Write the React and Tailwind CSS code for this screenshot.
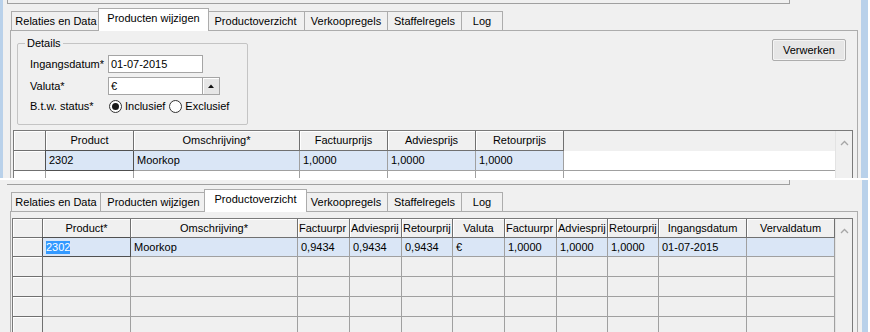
const TABS = [
  { label: "Relaties en Data", w: "w-[90px]", ws: "w-[94px]" },
  { label: "Producten wijzigen", w: "w-[107px]", ws: "w-[111px]" },
  { label: "Productoverzicht", w: "w-[99px]", ws: "w-[103px]" },
  { label: "Verkoopregels", w: "w-[84px]", ws: "w-[88px]" },
  { label: "Staffelregels", w: "w-[75px]", ws: "w-[79px]" },
  { label: "Log", w: "w-[42px]", ws: "w-[46px]" },
];

function TabStrip({ active }) {
  return (
    <div className="flex items-end h-[22px] pl-[1px]">
      {TABS.map(t =>
        t.label === active ? (
          <div
            key={t.label}
            className={`${t.ws} -ml-[2px] -mr-[3px] h-[23px] -mb-px relative z-10 bg-white border border-b-0 border-[#acacac] flex items-center justify-center pb-[3px] shrink-0`}
          >
            {t.label}
          </div>
        ) : (
          <div
            key={t.label}
            className={`${t.w} -mr-px h-[19px] bg-[#f0f0f0] border border-b-0 border-[#acacac] flex items-center justify-center shrink-0`}
          >
            {t.label}
          </div>
        )
      )}
    </div>
  );
}

function Radio({ checked, label }) {
  return (
    <div className="flex items-center gap-[3px]">
      <div className="w-[13px] h-[13px] rounded-full border border-[#333333] bg-white flex items-center justify-center">
        {checked && <div className="w-[7px] h-[7px] rounded-full bg-[#1a1a1a]" />}
      </div>
      <span>{label}</span>
    </div>
  );
}

function HeadCell({ w, left, children }) {
  return (
    <div
      className={`${w} shrink-0 h-full flex items-center overflow-hidden whitespace-nowrap border-r border-b border-[#707070] bg-[#f0f0f0] shadow-[inset_1px_1px_0_#ffffff] ${left ? "justify-start pl-[1px]" : "justify-center"}`}
    >
      {children}
    </div>
  );
}

function Cell({ w, bg, focus, children }) {
  return (
    <div
      className={`${w} ${bg} shrink-0 h-full flex items-center pl-[3px] overflow-hidden whitespace-nowrap border-r border-b ${focus ? "border-[#505050] relative z-10 shadow-[-1px_-1px_0_#505050]" : "border-[#a0a0a0]"}`}
    >
      {children}
    </div>
  );
}

function ScrollUp() {
  return (
    <div className="w-[17px] shrink-0 bg-[#f0f0f0] border-l border-[#e3e3e3] flex justify-center pt-[9px]">
      <svg width="9" height="6" viewBox="0 0 9 6">
        <polyline points="1,5 4.5,1.5 8,5" fill="none" stroke="#a6a6a6" strokeWidth="1.3" />
      </svg>
    </div>
  );
}

function Fields() {
  return (
    <fieldset className="ml-[6px] mt-[6px] w-[231px] border border-[#c4c4c4] rounded-[2px] shrink-0">
      <legend className="ml-[7px] px-[2px] leading-[13px]">Details</legend>
      <div className="grid grid-cols-[78px_auto] gap-y-[4px] pl-[12px] pt-[5px] pb-[10px] items-center">
        <span>Ingangsdatum*</span>
        <div className="w-[95px] h-[18px] bg-white border border-[#a5a5a5] flex items-center pl-[2px]">
          01-07-2015
        </div>
        <span>Valuta*</span>
        <div className="flex h-[18px]">
          <div className="w-[95px] h-[18px] bg-white border border-[#a5a5a5] flex items-center pl-[2px]">€</div>
          <div className="w-[17px] h-[18px] bg-[#e6e6e6] border border-[#a5a5a5] border-l-0 flex items-center justify-center shadow-[inset_1px_1px_0_#ffffff]">
            <svg width="6" height="4" viewBox="0 0 6 4">
              <polygon points="0,4 3,0.5 6,4" fill="#111111" />
            </svg>
          </div>
        </div>
        <span>B.t.w. status*</span>
        <div className="flex items-center gap-[4px] h-[15px] pl-[1px]">
          <Radio checked label="Inclusief" />
          <Radio label="Exclusief" />
        </div>
      </div>
    </fieldset>
  );
}

function TopGrid() {
  const cols = [
    ["w-[88px]", "Product", "2302"],
    ["w-[166px]", "Omschrijving*", "Moorkop"],
    ["w-[88px]", "Factuurprijs", "1,0000"],
    ["w-[88px]", "Adviesprijs", "1,0000"],
    ["w-[88px]", "Retourprijs", "1,0000"],
  ];
  return (
    <div className="ml-[2px] mr-[4px] mt-[5px] border border-[#7a7a7a] flex bg-white">
      <div className="flex-1 flex flex-col min-w-0">
        <div className="flex h-[20px]">
          <HeadCell w="w-[32px]" />
          {cols.map(c => (
            <HeadCell key={c[1]} w={c[0]}>{c[1]}</HeadCell>
          ))}
          <div className="flex-1 bg-[#f0f0f0]" />
        </div>
        <div className="flex h-[20px]">
          <HeadCell w="w-[32px]" />
          {cols.map((c, i) => (
            <Cell key={c[1]} w={c[0]} bg="bg-[#dae6f6]" focus={i === 0}>{c[2]}</Cell>
          ))}
          <div className="flex-1 bg-white border-b border-[#a0a0a0]" />
        </div>
        <div className="flex h-[20px]">
          <Cell w="w-[32px]" bg="bg-white" />
          {cols.map(c => (
            <Cell key={c[1]} w={c[0]} bg="bg-white" />
          ))}
          <div className="flex-1 bg-white" />
        </div>
      </div>
      <ScrollUp />
    </div>
  );
}

function BottomGrid() {
  const cols = [
    ["w-[88px]", "Product*", "2302", false],
    ["w-[167px]", "Omschrijving*", "Moorkop", false],
    ["w-[52px]", "Factuurpr", "0,9434", true],
    ["w-[52px]", "Adviesprij", "0,9434", true],
    ["w-[51px]", "Retourprij", "0,9434", true],
    ["w-[52px]", "Valuta", "€", false],
    ["w-[52px]", "Factuurpr", "1,0000", true],
    ["w-[51px]", "Adviesprij", "1,0000", true],
    ["w-[51px]", "Retourprij", "1,0000", true],
    ["w-[88px]", "Ingangsdatum", "01-07-2015", false],
    ["w-[88px]", "Vervaldatum", "", false],
  ];
  const empty = [1, 2, 3, 4, 5];
  return (
    <div className="ml-[1px] mr-[4px] mt-[6px] border border-[#7a7a7a] flex bg-[#f0f0f0]">
      <div className="flex-1 flex flex-col min-w-0 overflow-hidden">
        <div className="flex h-[19px]">
          <HeadCell w="w-[30px]" />
          {cols.map((c, i) => (
            <HeadCell key={i} w={c[0]} left={c[3]}>{c[1]}</HeadCell>
          ))}
        </div>
        <div className="flex h-[19px]">
          <HeadCell w="w-[30px]" />
          {cols.map((c, i) => (
            <Cell key={i} w={c[0]} bg="bg-[#dae6f6]" focus={i === 0}>
              {i === 0 ? <span className="bg-[#3399ff] text-white">{c[2]}</span> : c[2]}
            </Cell>
          ))}
        </div>
        {empty.map(r => (
          <div key={r} className="flex h-[20px]">
            <HeadCell w="w-[30px]" />
            {cols.map((c, i) => (
              <Cell key={i} w={c[0]} bg="bg-[#f0f0f0]" />
            ))}
          </div>
        ))}
      </div>
      <ScrollUp />
    </div>
  );
}

export default function App() {
  return (
    <div className="w-[870px] h-[332px] overflow-hidden bg-white flex flex-col font-['Liberation_Sans',Arial,sans-serif] text-[11px] leading-[13px] text-black">
      {/* Producten wijzigen */}
      <div className="h-[178px] shrink-0 flex overflow-hidden">
        <div className="w-[3px] shrink-0 bg-[#b9d1ea]" />
        <div className="flex-1 min-w-0 bg-[#f0f0f0] flex flex-col">
          <div className="ml-[4px] w-[783px] h-[4px] shrink-0 border-l border-r border-b border-[#a0a0a0]" />
          <div className="ml-[7px] mt-[4px]">
            <TabStrip active="Producten wijzigen" />
          </div>
          <div className="ml-[7px] mr-[3px] flex-1 border border-[#acacac] bg-[#f0f0f0] flex flex-col">
            <div className="flex items-start justify-between">
              <Fields />
              <button className="mt-[8px] mr-[11px] w-[74px] h-[22px] rounded-[2px] border border-[#adadad] bg-[#e6e6e6] shadow-[inset_0_0_0_1px_#f4f4f4]">
                Verwerken
              </button>
            </div>
            <TopGrid />
          </div>
        </div>
        <div className="w-[7px] shrink-0 bg-[#b9d1ea]" />
        <div className="w-[2px] shrink-0 bg-white" />
      </div>

      <div className="h-[2px] shrink-0 bg-white" />

      {/* Productoverzicht */}
      <div className="flex-1 flex overflow-hidden">
        <div className="flex-1 min-w-0 bg-[#f0f0f0] flex flex-col">
          <div className="ml-[7px] w-[783px] h-[5px] shrink-0 border-r border-b border-[#a0a0a0]" />
          <div className="ml-[10px] mt-[4px]">
            <TabStrip active="Productoverzicht" />
          </div>
          <div className="ml-[10px] mr-[4px] flex-1 border border-[#acacac] bg-[#f0f0f0] flex flex-col">
            <BottomGrid />
          </div>
        </div>
        <div className="w-[6px] shrink-0 bg-[#b9d1ea]" />
        <div className="w-[2px] shrink-0 bg-white" />
      </div>
    </div>
  );
}
